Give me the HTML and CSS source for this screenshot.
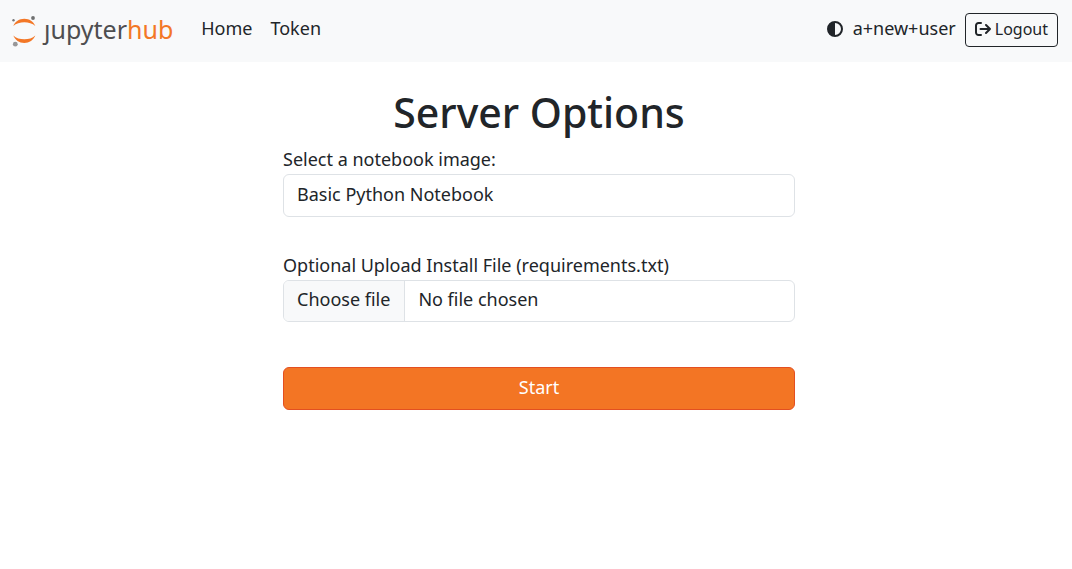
FILE: index.html
```html
<!DOCTYPE html>
<html lang="en">
<head>
<meta charset="utf-8">
<meta name="viewport" content="width=device-width, initial-scale=1">
<title>JupyterHub</title>
<link rel="stylesheet" href="styles.css">
</head>
<body>
<header class="navbar">
  <a class="brand" href="#" aria-label="JupyterHub">
    <svg class="brand-mark" viewBox="0 0 26 34" aria-hidden="true">
      <path d="M1.300 12C3 7.500 7.300 4.700 12.300 4.700S21.600 7.500 23.300 12C20.500 9.600 16.500 8.300 12.300 8.300S4.100 9.600 1.300 12Z" fill="#f37726"/>
      <path d="M1.300 21.500C4 24.200 8 25.300 12.300 25.300S20.600 24.200 23.300 21.500C21.600 26 17.300 29 12.300 29S3 26 1.300 21.500Z" fill="#f37726"/>
      <circle cx="21" cy="4" r="1.900" fill="#6f7070"/>
      <circle cx="1.500" cy="6.300" r="1.200" fill="#767677"/>
      <circle cx="3.300" cy="30.200" r="2.400" fill="#989798"/>
    </svg>
    <span class="brand-name">ȷupyter<span class="brand-hub">hub</span></span>
  </a>
  <nav class="links">
    <a href="#">Home</a>
    <a href="#">Token</a>
  </nav>
  <div class="account">
    <button class="theme" type="button" aria-label="Toggle theme">
      <svg viewBox="0 0 16 16" aria-hidden="true">
        <circle cx="8" cy="8" r="7" fill="none" stroke="currentColor" stroke-width="2"/>
        <path d="M8 1a7 7 0 0 0 0 14z" fill="currentColor"/>
      </svg>
    </button>
    <span class="user">a+new+user</span>
    <a class="logout" href="#">
      <svg viewBox="0 0 16 16" aria-hidden="true">
        <path d="M6 2H3.500A2.500 2.500 0 0 0 1 4.500v7A2.500 2.500 0 0 0 3.500 14H6M5.500 8H15M11 4l4 4-4 4" fill="none" stroke="currentColor" stroke-width="2" stroke-linecap="round" stroke-linejoin="round"/>
      </svg>
      Logout
    </a>
  </div>
</header>
<main class="page">
  <h1>Server Options</h1>
  <form class="options">
    <div class="field">
      <label for="image">Select a notebook image:</label>
      <select class="control" id="image">
        <option>Basic Python Notebook</option>
      </select>
    </div>
    <div class="field">
      <label for="requirements">Optional Upload Install File (requirements.txt)</label>
      <input class="file-input" id="requirements" type="file">
      <label class="control file" for="requirements">
        <span class="file-button">Choose file</span>
        <span class="file-name">No file chosen</span>
      </label>
    </div>
    <button class="start" type="submit">Start</button>
  </form>
</main>
</body>
</html>
```
FILE: styles.css
```css
* {
  box-sizing: border-box;
}

body {
  margin: 0;
  background: #fff;
  color: #212529;
  font: 18px/27px "Noto Sans", "Liberation Sans", sans-serif;
}

a {
  color: inherit;
  text-decoration: none;
}

.navbar {
  display: flex;
  align-items: center;
  min-height: 62px;
  padding: 0 14px 0 12px;
  background: #f8f9fa;
}

.brand {
  display: flex;
  align-items: center;
  gap: 6px;
}

.brand-mark {
  width: 26px;
  height: 34px;
}

.brand-name {
  padding-bottom: 4px;
  color: #4e4e50;
  font: 25px/30px "Noto Sans", sans-serif;
}

.brand-hub {
  color: #f37726;
}

.links {
  display: flex;
  gap: 18px;
  margin-left: 28px;
  padding-bottom: 5px;
}

.account {
  display: flex;
  align-items: center;
  margin-left: auto;
  padding-bottom: 2px;
}

.theme {
  display: flex;
  padding: 0 0 2px;
  border: 0;
  background: none;
  color: inherit;
}

.theme svg,
.logout svg {
  width: 16px;
  height: 16px;
}

.user {
  margin: 0 9px 0 10px;
  padding-bottom: 3px;
}

.logout {
  display: flex;
  align-items: center;
  gap: 4px;
  padding: 3px 9px 5px;
  border: 1px solid #212529;
  border-radius: 4px;
  font-size: 16px;
  line-height: 24px;
}

.page {
  max-width: 518px;
  margin: 0 auto;
  padding: 25px 0 0 6px;
}

h1 {
  margin: 0 0 9px;
  font-size: 41px;
  font-weight: 500;
  line-height: 50px;
  text-align: center;
}

.options,
.field {
  display: flex;
  flex-direction: column;
}

.field {
  position: relative;
  gap: 1px;
  margin-bottom: 35px;
}

.control {
  width: 100%;
  height: 42px;
  border: 1px solid #dee2e6;
  border-radius: 6px;
  background: #fff;
  color: inherit;
  font: inherit;
}

select.control {
  height: 43px;
  appearance: none;
  padding: 0 13px 2px;
}

.file-input {
  position: absolute;
  opacity: 0;
}

.file {
  display: flex;
  overflow: hidden;
  line-height: 37px;
}

.file-button {
  padding: 0 14px 0 13px;
  border-right: 1px solid #dee2e6;
  background: #f8f9fa;
}

.file-name {
  padding: 0 13px;
}

.start {
  height: 43px;
  margin-top: 10px;
  padding: 0 0 2px;
  border: 1px solid #e34f21;
  border-radius: 6px;
  background: #f37524;
  color: #fff;
  font: inherit;
}
```
